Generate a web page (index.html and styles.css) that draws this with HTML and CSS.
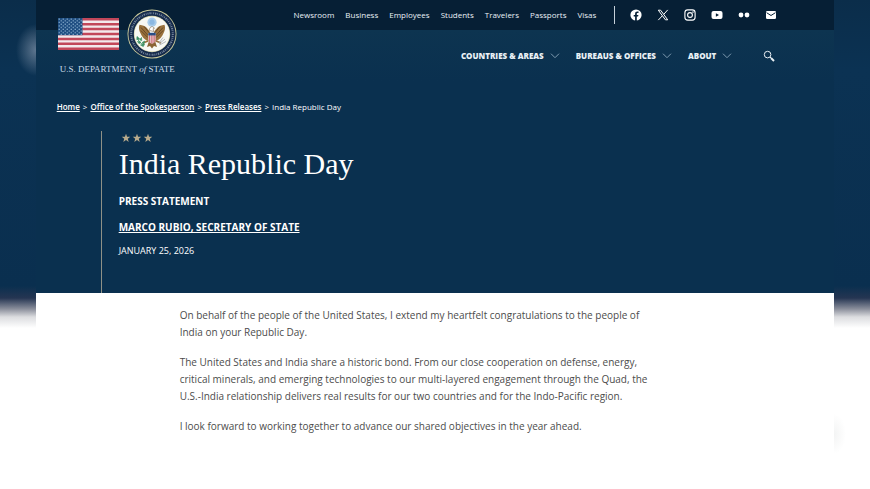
FILE: index.html
```html
<!DOCTYPE html>
<html lang="en">
<head>
<meta charset="utf-8">
<meta name="viewport" content="width=device-width, initial-scale=1">
<title>India Republic Day</title>
<link rel="stylesheet" href="styles.css">
</head>
<body>
<div class="page">
  <header class="site-header">
    <a class="brand" href="#">
      <span class="brand-marks">
        <svg class="flag" viewBox="0 0 61 32" aria-hidden="true">
          <defs>
            <pattern id="stars" width="4" height="3.4" patternUnits="userSpaceOnUse">
              <circle cx="1.2" cy="1" r=".65" fill="#a9cbe6"/>
              <circle cx="3.2" cy="2.7" r=".65" fill="#a9cbe6"/>
            </pattern>
          </defs>
          <rect width="61" height="32" fill="#f3e9ec"/>
          <path d="M0 1.23h61M0 6.15h61M0 11.08h61M0 16h61M0 20.92h61M0 25.85h61M0 30.77h61" stroke="#c2475a" stroke-width="2.46"/>
          <rect width="24.5" height="17.2" fill="#1d4c80"/>
          <rect width="24.5" height="17.2" fill="url(#stars)"/>
        </svg>
        <svg class="seal" viewBox="0 0 50 50" aria-hidden="true">
          <circle cx="25" cy="25" r="24.5" fill="#c9c99a"/>
          <circle cx="25" cy="25" r="23.6" fill="#14294a"/>
          <circle cx="25" cy="25" r="20.8" fill="none" stroke="#71839a" stroke-width="2" stroke-dasharray="1 .9 1.4 .8 .7 1"/>
          <circle cx="25" cy="25" r="18.2" fill="#c9c99a"/>
          <circle cx="25" cy="25" r="17.6" fill="#f8f8f3"/>
          <circle cx="25" cy="13.2" r="4.6" fill="#a9cdec"/>
          <circle cx="25" cy="13.2" r="2.6" fill="#8bb8e2"/>
          <path d="M23 23c-2-3-4-6.500-10.500-7.300-1.200 3-.3 6 .9 8.300 1.200 3.500 4 7 8.600 8.500zM27 23c2-3 4-6.500 10.500-7.300 1.200 3 .3 6-.9 8.300-1.200 3.500-4 7-8.600 8.500z" fill="#99713c"/>
          <path d="M14 18.500l7 8M13.800 21.500l7 7M17 17.500l5 6M36 18.500l-7 8M36.200 21.500l-7 7M33 17.500l-5 6" stroke="#5b3d20" stroke-width=".8"/>
          <path d="M22.500 21.500c-.2-2.500 1-4 3-3.800l2 1.500-1.500.6.9 2.700z" fill="#fff" stroke="#6a5030" stroke-width=".5"/>
          <path d="M22 32l-2 6 3-1 2 2.500 2-2.500 3 1-2-6z" fill="#8a6333"/>
          <path d="M21.300 24h7.400v6.500c0 2.300-2 3.700-3.700 4.300-1.700-.6-3.700-2-3.700-4.300z" fill="#efe6e6"/>
          <path d="M22.400 26v7M24.200 26v8.500M26 26v8.500M27.800 26v7" stroke="#c44c5b" stroke-width=".9"/>
          <path d="M21.300 23.800h7.400v2.600h-7.400z" fill="#274e86"/>
          <path d="M21 32l-5 2M29 32l5 2" stroke="#99713c" stroke-width="1.600"/>
          <path d="M17 36c-3-1-6-4-6.500-7.500" fill="none" stroke="#3f9266" stroke-width="1"/>
          <path d="M10 27.500l2.600 2.200-2.800 1zM14.500 28.500l.2 3.200-2-1zM10.500 32.500l3.400.6-1.800 1.600zM17.600 32l-.8 3.300-1.800-1.600zM13.500 36l4-1-1.200 2.600z" fill="#3f9266" stroke="#3f9266" stroke-width=".7"/>
          <path d="M32 35l6-5M32.500 36l6.500-3.500M32 34l4-5.500" stroke="#a4aab0" stroke-width=".8"/>
        </svg>
      </span>
      <span class="brand-name">U.S. DEPARTMENT <em>of</em> STATE</span>
    </a>
    <div class="utility">
      <nav class="utility-nav" aria-label="Utility">
        <a href="#">Newsroom</a><a href="#">Business</a><a href="#">Employees</a><a href="#">Students</a><a href="#">Travelers</a><a href="#">Passports</a><a href="#">Visas</a>
      </nav>
      <nav class="social" aria-label="Social media">
        <a href="#" aria-label="Facebook"><svg viewBox="0 0 12 12"><circle cx="6" cy="6" r="5.600" fill="#fff"/><path d="M5.100 12V7.600H3.700V6h1.400V4.800c0-1.500.9-2.300 2.200-2.300l1.200.1V4h-.8c-.7 0-.9.400-.9.900V6h1.600l-.3 1.600H6.800V12z" fill="#061f35"/></svg></a>
        <a href="#" aria-label="X"><svg viewBox="0 0 12 12"><path d="M1.300 1.200h2.300l7.100 9.600H8.400zM10.700 .9L6.800 5.300M5.200 6.900L1.300 11.100" fill="none" stroke="#fff" stroke-width="1"/></svg></a>
        <a href="#" aria-label="Instagram"><svg viewBox="0 0 12 12" fill="none" stroke="#fff" stroke-width="1.100"><rect x=".9" y=".9" width="10.200" height="10.200" rx="2.800"/><circle cx="6" cy="6" r="2.400"/><circle cx="9" cy="3" r=".3"/></svg></a>
        <a href="#" aria-label="YouTube"><svg viewBox="0 0 12 12"><rect x=".5" y="2" width="11" height="8" rx="2" fill="#fff"/><path d="M4.900 4.200v3.600L8 6z" fill="#061f35"/></svg></a>
        <a href="#" aria-label="Flickr"><svg viewBox="0 0 12 12" fill="#fff"><circle cx="3" cy="6" r="2.400"/><circle cx="9" cy="6" r="2.400"/></svg></a>
        <a href="#" aria-label="Email"><svg viewBox="0 0 12 12"><rect x="1" y="2" width="10" height="8" rx="1.200" fill="#fff"/><path d="M1.600 3.700L6 6.500l4.400-2.800" fill="none" stroke="#061f35" stroke-width="1"/></svg></a>
      </nav>
    </div>
    <nav class="main-nav" aria-label="Main">
      <button type="button">COUNTRIES &amp; AREAS<svg viewBox="0 0 10 6"><path d="M1 .7l4 4 4-4"/></svg></button>
      <button type="button">BUREAUS &amp; OFFICES<svg viewBox="0 0 10 6"><path d="M1 .7l4 4 4-4"/></svg></button>
      <button type="button">ABOUT<svg viewBox="0 0 10 6"><path d="M1 .7l4 4 4-4"/></svg></button>
      <button type="button" class="search" aria-label="Search"><svg viewBox="0 0 12 12"><circle cx="4.600" cy="4.600" r="3.300"/><path d="M7 7l1.200 1.200"/><path d="M8 8l3 3" stroke-width="1.900"/></svg></button>
    </nav>
  </header>

  <section class="hero">
    <nav class="breadcrumb" aria-label="Breadcrumb">
      <a href="#">Home</a><span>&gt;</span><a href="#">Office of the Spokesperson</a><span>&gt;</span><a href="#">Press Releases</a><span>&gt;</span><span>India Republic Day</span>
    </nav>
    <div class="hero-body">
      <svg class="hero-stars" viewBox="0 0 32 10" fill="#b8aa8c" aria-hidden="true">
        <path id="star" d="M5 .7l1.100 3H9.300L6.800 5.700l.9 3.200L5 7.100 2.300 8.900l.9-3.200L.7 3.700h3.200z"/>
        <use href="#star" x="11"/><use href="#star" x="22"/>
      </svg>
      <h1>India Republic Day</h1>
      <p class="kind">PRESS STATEMENT</p>
      <p class="author"><a href="#">MARCO RUBIO, SECRETARY OF STATE</a></p>
      <p class="date">JANUARY 25, 2026</p>
    </div>
  </section>

  <main class="article">
    <p>On behalf of the people of the United States, I extend my heartfelt congratulations to the people of India on your Republic Day.</p>
    <p>The United States and India share a historic bond. From our close cooperation on defense, energy, critical minerals, and emerging technologies to our multi-layered engagement through the Quad, the U.S.-India relationship delivers real results for our two countries and for the Indo-Pacific region.</p>
    <p>I look forward to working together to advance our shared objectives in the year ahead.</p>
  </main>
</div>
</body>
</html>
```
FILE: styles.css
```css
* { box-sizing: border-box; }

body {
  margin: 0;
  min-height: 100vh;
  font-family: "Open Sans", "Noto Sans", sans-serif;
  font-size: 10px;
  color: #fff;
  background:
    radial-gradient(ellipse 20px 26px at 36px 50px, rgba(150, 165, 185, .6), transparent),
    radial-gradient(ellipse 12px 20px at 834px 434px, #f3f4f4, transparent),
    linear-gradient(#0b2d4a, #0b3253 70px, #0a2f4f 286px, #253552 298px, #8b8f9c 309px, #dcdde0 317px, #fff 328px);
}

a { color: inherit; }
p, h1 { margin: 0; }
svg { display: block; }

.page {
  margin: 0 4.100%;
  min-height: 100vh;
  background: #fff;
}

.site-header {
  display: grid;
  grid-template-columns: 164px 1fr;
  grid-template-rows: 30px 51px;
  background: linear-gradient(#061f35 30px, #0d3450 30px, #0a304f);
}

.brand {
  grid-row: 1 / 3;
  padding: 9px 0 0 22px;
  text-decoration: none;
}
.brand-marks { display: flex; align-items: center; gap: 8px; }
.flag { width: 61px; height: 32px; }
.seal { width: 50px; height: 50px; }
.brand-name {
  display: block;
  width: 119px;
  margin-top: 4px;
  text-align: center;
  white-space: nowrap;
  font: 9px/12px "Liberation Serif", serif;
  color: #cbdbe8;
}

.utility {
  display: flex;
  justify-content: flex-end;
  align-items: center;
  padding-right: 57px;
  font-size: 8px;
  font-weight: 500;
  line-height: 12px;
  color: #e9f0f5;
}
.utility-nav { display: flex; gap: 11px; }
.utility-nav a { text-decoration: none; }
.social {
  display: flex;
  align-items: center;
  gap: 15px;
  height: 18px;
  margin-left: 18px;
  padding-left: 15px;
  border-left: 1px solid #c5d0d9;
}
.social svg { width: 12px; height: 12px; }

.main-nav {
  display: flex;
  justify-content: flex-end;
  align-items: center;
  gap: 16px;
  padding-right: 59px;
}
.main-nav button {
  display: flex;
  align-items: center;
  gap: 6px;
  padding: 0;
  border: 0;
  background: none;
  font: 800 8px/12px "Open Sans", "Noto Sans", sans-serif;
  color: #e9f0f5;
}
.main-nav svg { width: 10px; height: 6px; fill: none; stroke: #7f9bb0; stroke-width: 1; }
.main-nav .search { margin-left: 15px; }
.main-nav .search svg { width: 12px; height: 12px; stroke: #e9f0f5; }

.hero {
  padding: 20px 21px 0;
  background: #0a304f;
}
.breadcrumb {
  display: flex;
  gap: 3px;
  font-size: 8px;
  line-height: 12px;
}
.breadcrumb a { font-weight: 600; }
.hero-body {
  margin: 18px 0 0 44px;
  padding: 2px 0 35px 17px;
  border-left: 1px solid #8f9187;
}
.hero-stars { width: 32px; height: 10px; margin-left: 2px; }
h1 {
  font: 30px/42px "Liberation Serif", serif;
}
.kind, .author { font-size: 10px; font-weight: 700; line-height: 14px; }
.kind { margin-top: 9px; }
.author { margin-top: 12px; }
.date { margin-top: 10px; font-size: 9px; line-height: 14px; }

.article {
  max-width: 614px;
  padding: 14px 0 40px 144px;
  color: #4c4c4c;
  line-height: 17px;
}
.article p + p { margin-top: 13px; }
```
